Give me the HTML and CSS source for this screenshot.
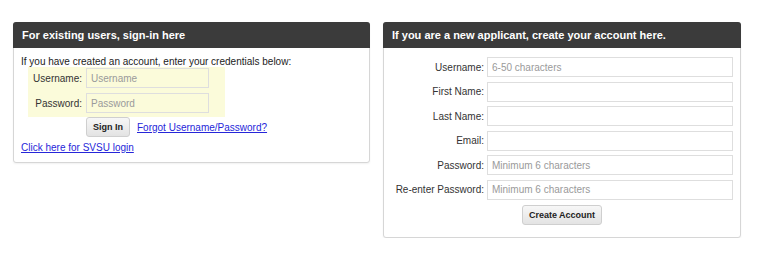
FILE: index.html
```html
<!DOCTYPE html>
<html lang="en">
<head>
    <meta charset="UTF-8">
    <meta name="viewport" content="width=device-width, initial-scale=1.0">
    <title>Applicant Login</title>
    <link rel="stylesheet" href="styles.css">
</head>
<body>
    <div class="login-page">
        <div class="panel panel-signin">
            <div class="panel-heading">For existing users, sign-in here</div>
            <div class="panel-body">
                <p class="intro">If you have created an account, enter your credentials below:</p>
                <div class="credentials">
                    <label for="loginUser">Username:</label>
                    <input type="text" id="loginUser" placeholder="Username">
                    <label for="loginPass">Password:</label>
                    <input type="password" id="loginPass" placeholder="Password">
                </div>
                <div class="signin-actions">
                    <button class="btn">Sign In</button>
                    <a href="#">Forgot Username/Password?</a>
                </div>
                <a class="svsu-link" href="#">Click here for SVSU login</a>
            </div>
        </div>

        <div class="panel panel-register">
            <div class="panel-heading">If you are a new applicant, create your account here.</div>
            <div class="panel-body">
                <div class="register-form">
                    <label for="newUser">Username:</label>
                    <input type="text" id="newUser" placeholder="6-50 characters">
                    <label for="firstName">First Name:</label>
                    <input type="text" id="firstName">
                    <label for="lastName">Last Name:</label>
                    <input type="text" id="lastName">
                    <label for="email">Email:</label>
                    <input type="text" id="email">
                    <label for="newPass">Password:</label>
                    <input type="password" id="newPass" placeholder="Minimum 6 characters">
                    <label for="newPass2">Re-enter Password:</label>
                    <input type="password" id="newPass2" placeholder="Minimum 6 characters">
                </div>
                <div class="register-actions">
                    <button class="btn">Create Account</button>
                </div>
            </div>
        </div>
    </div>
</body>
</html>
```

FILE: styles.css
```css
body {
    margin: 0;
    font-family: "Liberation Sans", Arial, sans-serif;
    font-size: 10px;
    color: #333;
    background: #fff;
}

.login-page {
    display: flex;
    align-items: flex-start;
    gap: 13px;
    padding: 22px 0 0 13px;
}

.panel {
    box-sizing: border-box;
    border: 1px solid #d6d6d6;
    border-radius: 3px;
    box-shadow: 0 1px 2px rgba(0, 0, 0, 0.06);
    background: #fff;
}

.panel-signin {
    width: 357px;
}

.panel-register {
    width: 358px;
}

.panel-heading {
    height: 26px;
    margin: -1px -1px 0;
    padding: 0 9px;
    background: #3b3b3b;
    color: #fff;
    font-size: 11px;
    font-weight: bold;
    line-height: 26px;
    border-radius: 3px 3px 0 0;
}

.panel-signin .panel-body {
    padding: 9px 7px 8px 7px;
}

.intro {
    margin: 0;
    line-height: 10px;
    color: #222;
}

.credentials {
    display: grid;
    grid-template-columns: 54px 123px;
    column-gap: 4px;
    row-gap: 5px;
    align-items: center;
    width: 197px;
    margin-left: 7px;
    padding: 1px 0 4px;
    background: #fbfbda;
}

label {
    text-align: right;
    white-space: nowrap;
}

input {
    box-sizing: border-box;
    height: 20px;
    width: 100%;
    margin: 0;
    padding: 0 4px;
    border: 1px solid #dedede;
    background: transparent;
    font-family: inherit;
    font-size: 10px;
    color: #333;
}

.register-form input {
    background: #fff;
}

input::placeholder {
    color: #9a9a9a;
}

.signin-actions {
    display: flex;
    align-items: center;
    gap: 7px;
    margin-left: 65px;
}

a {
    color: #2626d9;
    text-decoration: underline;
}

.svsu-link {
    display: inline-block;
    margin-top: 5px;
    line-height: 12px;
}

.btn {
    box-sizing: border-box;
    height: 20px;
    padding: 0 6px;
    border: 1px solid #cfcfcf;
    border-radius: 3px;
    background: linear-gradient(#f7f7f7, #e3e3e3);
    color: #222;
    font-family: inherit;
    font-size: 9px;
    font-weight: bold;
    cursor: pointer;
}

.panel-register .panel-body {
    padding: 9px 7px 12px 0;
}

.register-form {
    display: grid;
    grid-template-columns: 100px 1fr;
    column-gap: 3px;
    row-gap: 4.6px;
    align-items: center;
}

.register-actions {
    display: flex;
    justify-content: center;
    margin-top: 5px;
    padding-left: 7px;
}
```
